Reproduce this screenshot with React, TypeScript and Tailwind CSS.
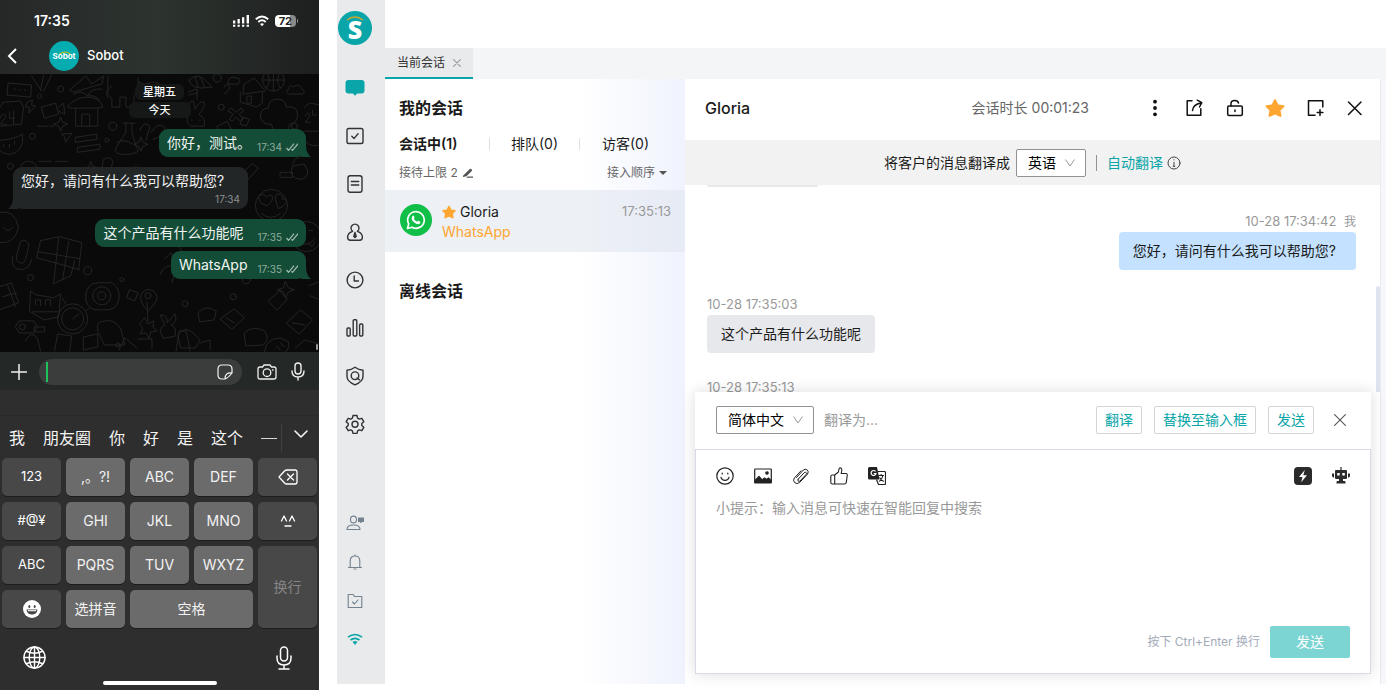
import type { ReactNode } from "react";

type BoxProps = { size?: string; children: ReactNode; stroke?: number; box?: string };

function Icon({ size = "size-5", children, stroke = 1.4, box = "0 0 20 20" }: BoxProps) {
  return (
    <svg
      className={`${size} shrink-0`}
      viewBox={box}
      fill="none"
      stroke="currentColor"
      strokeWidth={stroke}
      strokeLinecap="round"
      strokeLinejoin="round"
      aria-hidden="true"
    >
      {children}
    </svg>
  );
}

const STAR = "M10 1.6c.5 0 .8.3 1 .7l2 4.100 4.800.7c1 .1 1.300 1.100.6 1.800l-3.300 3.200.9 4.700c.1.900-.7 1.500-1.500 1.100L10 15.800l-4.500 2.100c-.8.4-1.600-.2-1.500-1.100l.9-4.700L1.600 8.900c-.7-.7-.4-1.700.6-1.800L7 6.400l2-4.100c.2-.4.5-.7 1-.7z";

/* ---------- phone ---------- */

function Wallpaper() {
  return (
    <svg
      className="absolute inset-0 size-full"
      viewBox="0 0 319 277"
      preserveAspectRatio="xMidYMin slice"
      fill="none"
      stroke="#262827"
      strokeWidth="0.9"
      strokeLinecap="round"
      strokeLinejoin="round"
      aria-hidden="true"
    >
      <path d="M9 9l23 2-1 12-23-2zM15 15h1M20 16h1M25 16h1M32 2l10 15M44 1l-3 15M52 1l-8 16M70 16l16-14 6 8 12-8-2 8-28 8z" />
      <path d="M0 34l4-6 17-1 3 6-2 17-22 2M1 44c0-5 6-5 5-1l-5 7h6M10 38v6h5M14 37v13M28 28l5-2-1 5 4 1-7 7 1-6-4 0z" />
      <path d="M42 33l14-4 3 11-14 4zM59 33l5-4 1 11-6-3M68 32q8-9 20-9 13 1 15 10l-6 1H71zM76 34v18h22V34M82 52V40h8v12M88 22q-6-7-14-2M88 22q2-8 14-7M88 22q6-2 12 4" />
      <path d="M108 2v18l4 5v8h8V23h6v10h8V22l4-6V4M112 12q-8 4-4 12M140 8q4 4 12 0q8 1 12 5l-5 4q-14 4-20-4z" />
      <path d="M189 6q8-8 17 1l6 6-10 1q-11 0-13-8zM195 3l3 10M201 4l3 9M228 8q1-7 8-4 6 0 2 6h-10zM244 10l10-6 11 13-22 3zM240 18v10l16 5 6-4V18M247 22h4v7h-4z" />
      <circle cx="273" cy="6" r="11" /><path d="M262 6h22M273-5v22M266-2q6 8 0 16M280-2q-6 8 0 16M288 15q1-5 5-2 6-5 8 2 5 2 1 5h-14q-4-3 0-5z" />
      <path d="M260 42q0-8 8-8 0-9 9-9 8 0 9 8 11-2 11 8 0 8-8 9 0 8-8 6-8 4-10-6-10 1-11-8zM304 33l5-4 12 2M305 42c0-4 5-4 4 0l-4 6h5M312 36v5h4" />
      <path d="M231 34l5 4 5-4 2 3-4 3 4 5-3 2-4-4-4 4-3-2 4-5-5-3zM189 40q-2-14 4-13 2 4 2 8 5-9 9-7 1 5-5 12 7 5 5 12h-14q-6-6-1-12zM191 46h1M199 46h1M224 13q2-5 6 0-2 4-6 7" />
      <path d="M0 66q12 0 23-6 2 17-12 20-7 0-11-4M4 70v2M10 70v3M15 67v3M61 43l2 5 5 2-5 2-2 5-2-5-5-2 5-2zM62 60l10-1-6 9-1-5zM76 63l21-3v5l-21 3zM78 73l22-3v5l-22 3zM38 52h10M50 52h4M126 48v10l-10 16q-3 7 12 6t8-8l-4-14v-9M123 49h12M117 68q8-4 16 2" />
      <path d="M140 56q4-10 10-4l-4 14M151 58q8-12 14-4-1 8-12 11M141 63l2 5 5 2-5 2-2 5-2-5-5-2 5-2zM217 52l10-5 4 8-9 6zM243 43l6 2-3 7-6-2zM303 57h16M303 60q1 14 16 11M188 18l9-3v10M189 21l8-2" />
      <path d="M20 108V95q3-9 10-8 9 2 8 12v8l-5-2-4 4-5-4zM24 96h1M32 97h1M39 87h13M56 87h12M44 100l2 5 5 2-5 2-2 5-2-5-5-2 5-2zM62 97h10v10H62zM75 97h9v10h-9zM91 87l2 5 4 1-4 2-2 5-2-5-4-1 4-2zM104 85q7-4 9 2l-2 9-9 1z" />
      <path d="M123 105q-7-9 1-12 5 0 6 4 3-6 8-4 6 6-5 15zM180 118q0-15 14-17 14 0 16 14M194 101v18M183 108l24 8M240 101l12-12 6 5-14 15zM238 108l-3 6 6-2M292 90q2-6 8-8M292 92q-5 12 9 13 11-3 3-15z" />
      <circle cx="271" cy="131" r="16" /><path d="M260 128q-4-8 2-8 3 0 4 3 3-4 6-1 1 5-5 9zM275 124q0-6 5-4 3 2 2 5 4-2 4 3-3 5-8 6zM261 139q9 8 19 0" />
      <circle cx="306" cy="162" r="15" /><path d="M299 156h4M308 156h4M297 166q9 8 17-1M308 169q4 6 6-1M280 98h12v5h-12zM0 138q15-4 19 15-4 17-19 15M4 153q5 6 9 0M261 178l8 3-7 8-1-5z" />
      <path d="M41 166l19-4 22 6-3 26M41 166l-4 17 43 12M59 163l-5 46M69 167l-6 38M38 177l42 7M54 209l17-8 4-15" /><path d="M20 170q1-6 6-4 4 2 3 7l-3 12q-2 5-6 3t-3-7zM13 182q-2 13 9 13 8-1 10-10" />
      <path d="M0 212l12-4 7 20-19 7M3 222l14-4M8 210l8 22M30 236l1-20 5 4 18 3 7-4-2 23-14 3zM36 230v-5h5v6M46 230v-5h5v6M33 237h25" />
      <circle cx="73" cy="244" r="15" /><circle cx="73" cy="244" r="11" /><path d="M73 244l6-5M66 229l-3-5M86 236l4-3M86 220q2-12 12-12h14q9 6 7 17-2 11-15 10H95q-10-3-9-15z" /><circle cx="102" cy="221" r="9" /><circle cx="102" cy="221" r="4" />
      <path d="M148 236q-9-9-7-16 4-8 12-4 7 6 2 12zM130 215l8 3-3 8-8-3zM160 200q4-12 16-8l-4 16M165 184l6-6 3 8M178 172l8 8-10 8M147 228l1 18M98 256q-3-10 8-10 8-2 15 8l4 16h-20z" /><circle cx="148" cy="221" r="3" />
      <path d="M145 243l3 6 6-3-1 6 4 4-6 1-2 6-3-5-6 1 3-5-3-5zM163 263q-6-10 2-13l-5-10q8 0 7 8l8-9q3 8-4 11 6 2 4 11zM178 260q6-9 14-3l8 8-5 8h-14zM20 246h14l4 6-4 6H20l-4-6zM35 252h10v5H35zM198 238q8-9 18-2l-2 9-14 2z" />
      <path d="M220 244l14-10 10 9-12 11zM226 243l8 5M244 258q8-8 20-2 6 8-1 14l-17 1zM268 226l11-10 8 8-10 11zM286 248l14-13 12 10-13 14zM292 248l12 2M308 211l11-4M310 221l9 4M285 207l3 6 6 2-6 2-3 6-2-6-6-2 6-2z" />
      <path d="M26 266q6-12 12-2l3 12M55 276l3-17 14 2-2 15M84 262l14-3v13l-14 3zM119 275l6-12 12 10M138 264h14v10M176 276l3-20h7l4 20M200 268l10-3v10M264 277q2-14 16-14l8 4q2 8-6 12M280 268l4 4M276 271l4 4M295 273l9-8 15 4" />
      <circle cx="40" cy="22" r="2" /><circle cx="61" cy="15" r="3" /><circle cx="113" cy="52" r="4" /><circle cx="221" cy="33" r="3" /><circle cx="217" cy="4" r="4" /><circle cx="33" cy="62" r="3" /><circle cx="107" cy="66" r="2" /><circle cx="11" cy="92" r="3" /><circle cx="89" cy="119" r="3" /><circle cx="31" cy="203" r="3" /><circle cx="88" cy="196" r="4" /><circle cx="273" cy="164" r="3" /><circle cx="122" cy="205" r="2" /><circle cx="246" cy="205" r="4" /><circle cx="185" cy="229" r="3" /><circle cx="23" cy="252" r="3" /><circle cx="233" cy="222" r="3" /><circle cx="118" cy="270" r="2" /><circle cx="294" cy="52" r="3" />
    </svg>
  );
}

function Ticks() {
  return (
    <svg className="h-2 w-3 shrink-0" viewBox="0 0 12 8" fill="none" stroke="#9bb8aa" strokeWidth="1.3" aria-hidden="true">
      <path d="M.5 5l2 2.300L8 .7M5.500 6.300l1 1L12 .7" />
    </svg>
  );
}

function Outgoing({ text, time, gap = "gap-3", tail = false, space }: { text: string; time: string; gap?: string; tail?: boolean; space: string }) {
  return (
    <div className={`relative flex h-7 items-end self-end rounded-[9px] bg-[#144d37] px-2 pb-1 ${space} ${gap}`}>
      <span className="text-sm leading-5 text-[#f1f4f2]">{text}</span>
      <span className="flex items-center gap-1 text-[10px] leading-3 text-[#8fab9e]">
        {time}
        <Ticks />
      </span>
      {tail && (
        <svg className="absolute -right-[5px] bottom-0 h-3 w-3" viewBox="0 0 12 12" fill="#144d37" aria-hidden="true">
          <path d="M0 0h7q0 8 5 12H2z" />
        </svg>
      )}
    </div>
  );
}

function Key({ children, dark = false, className = "", label }: { children: ReactNode; dark?: boolean; className?: string; label?: string }) {
  return (
    <button
      type="button"
      aria-label={label}
      className={`flex items-center justify-center rounded-[5px] shadow-[0_1px_0_#1c1c1c] ${
        dark ? "bg-[#484848] text-[13px] text-white" : "bg-[#6b6b6b] text-sm text-[#f2f2f2]"
      } ${className}`}
    >
      {children}
    </button>
  );
}

function Phone() {
  return (
    <section aria-label="WhatsApp" className="flex w-[319px] shrink-0 flex-col bg-[#2e2e2e] text-white">
      <header className="flex h-[74px] flex-col bg-linear-to-r from-[#262828] via-[#2c342f] to-[#1e1f1f]">
        <div className="flex h-[42px] items-center justify-between pr-[21px] pl-[34px]">
          <span className="text-sm font-semibold">17:35</span>
          <div className="flex items-center gap-1.5">
            <svg className="h-3 w-4" viewBox="0 0 16 12" fill="#fff" aria-hidden="true">
              <path d="M0 5.500h2.300v3H0zM4.500 4h2.300v4.500H4.500zM9 2.300h2.300v6.200H9zM13.600 0H16v8.500h-2.400zM0 9.700h2.300v2H0zM4.500 9.700h2.300v2H4.500zM9 9.700h2.300v2H9zM13.600 9.700H16v2h-2.400z" />
            </svg>
            <svg className="h-3 w-3.5" viewBox="0 0 14 12" fill="none" stroke="#fff" strokeWidth="1.900" aria-hidden="true">
              <path d="M.8 4.300q6.200-5.800 12.400 0M3.300 7q3.700-3.300 7.400 0" />
              <path d="M5 9.100q2-1.600 4 0l-2 2.200z" fill="#fff" stroke="none" />
            </svg>
            <span className="flex items-center gap-px">
              <span className="rounded-[4px] bg-linear-to-r from-white from-72% to-[#8a8a8a] to-72% px-1 text-[11px] leading-3 font-bold text-[#222]">72</span>
              <span className="h-1 w-px rounded-r bg-[#8a8a8a]" />
            </span>
          </div>
        </div>
        <div className="flex h-7 items-center pl-1.5">
          <button type="button" aria-label="返回" className="flex size-4 items-center">
            <svg className="h-4 w-3" viewBox="0 0 12 16" fill="none" stroke="#fff" strokeWidth="2" aria-hidden="true">
              <path d="M10 1L3 8l7 7" />
            </svg>
          </button>
          <span className="relative ml-[27px] flex size-[30px] items-center justify-center rounded-full bg-[#06adb0]">
            <span className="text-[8px] leading-none font-bold">Sobot</span>
            <svg className="absolute top-2.5 left-2.5 h-1 w-3" viewBox="0 0 12 4" fill="none" stroke="#c9c32a" strokeWidth="1.200" aria-hidden="true">
              <path d="M.5 3Q6-1 11.500 3" />
            </svg>
          </span>
          <span className="ml-2 text-[13px] font-medium">Sobot</span>
        </div>
      </header>

      <div className="relative flex min-h-0 flex-1 flex-col overflow-hidden bg-[#0a0a0a]">
        <Wallpaper />
        <div className="relative flex flex-col px-[13px] pt-2.5">
          <span className="self-center rounded-md bg-[#151817] px-2 text-[11px] leading-4 font-medium">星期五</span>
          <span className="mt-0.5 self-center rounded-md bg-[#151817] px-5 text-[11px] leading-4 font-medium">今天</span>
          <Outgoing text="你好，测试。" time="17:34" gap="gap-1.5" tail space="mt-[11px]" />
          <div className="relative mt-2.5 flex h-[42px] w-[235px] flex-col rounded-[9px] bg-[#222627] px-2 pt-1">
            <span className="text-sm leading-5 whitespace-nowrap text-[#f1f1f1]">您好，请问有什么我可以帮助您?</span>
            <span className="self-end text-[10px] leading-4 text-[#8d9091]">17:34</span>
            <svg className="absolute bottom-0 -left-[5px] h-3 w-3" viewBox="0 0 12 12" fill="#222627" aria-hidden="true">
              <path d="M12 0H5q0 8-5 12h10z" />
            </svg>
          </div>
          <Outgoing text="这个产品有什么功能呢" time="17:35" space="mt-2.5" gap="gap-3.5" />
          <Outgoing text="WhatsApp" time="17:35" tail space="mt-1" gap="gap-2.5" />
        </div>
        <span className="absolute right-px bottom-0.5 h-1.5 w-0.5 rounded bg-[#9a9a9a]" />
      </div>

      <div className="flex h-[38px] items-center bg-[#242827] pt-px pl-[11px] text-[#f0f0f0]">
        <button type="button" aria-label="添加">
          <Icon size="size-4" box="0 0 16 16" stroke={1.5}><path d="M8 .5v15M.5 8h15" /></Icon>
        </button>
        <div className="relative ml-3 w-[203px]">
          <input aria-label="消息" className="block h-[26px] w-full rounded-full bg-[#3a3d3c] pr-8 pl-3 text-sm outline-none" />
          <span className="absolute top-[3px] left-[7px] h-5 w-0.5 bg-[#1fc15d]" />
          <span className="absolute top-[5px] right-[9px]">
            <Icon size="size-4" box="0 0 16 16" stroke={1.2}>
              <path d="M15 9V5q0-4-4-4H5Q1 1 1 5v6q0 4 4 4h3q3-1 7-6zM8 15q0-7 7-6" />
            </Icon>
          </span>
        </div>
        <button type="button" aria-label="拍照" className="ml-[15px]">
          <Icon size="h-4 w-5" box="0 0 20 16" stroke={1.3}>
            <path d="M1 5q0-2 2-2h2.500L7 1h6l1.500 2H17q2 0 2 2v8q0 2-2 2H3q-2 0-2-2z" />
            <circle cx="10" cy="8.700" r="3.800" /><path d="M15.500 6h.5" />
          </Icon>
        </button>
        <button type="button" aria-label="录音" className="ml-3.5">
          <Icon size="h-[19px] w-3.5" box="0 0 14 19" stroke={1.4}>
            <rect x="4" y="1" width="6" height="11" rx="3" /><path d="M1 9q0 6 6 6t6-6M7 15v3" />
          </Icon>
        </button>
      </div>

      <div className="h-[26px] border-b border-[#292929]" />
      <div className="flex h-[42px] items-center gap-[18px] pt-0.5 pl-[9px] text-base text-[#f4f4f4]">
        {["我", "朋友圈", "你", "好", "是", "这个"].map((word) => (
          <button key={word} type="button" className="leading-6 whitespace-nowrap">{word}</button>
        ))}
        <button type="button" aria-label="一" className="h-6 w-4 shrink-0"><span className="block h-px w-full bg-[#d8d8d8]" /></button>
        <span className="-ml-3.5 h-7 w-px bg-[#414141]" />
        <button type="button" aria-label="展开" className="-mt-2 -ml-1.5">
          <Icon size="h-2 w-3.5" box="0 0 14 8" stroke={1.6}><path d="M1 1l6 6 6-6" /></Icon>
        </button>
      </div>

      <div className="grid auto-rows-[38px] grid-cols-5 gap-x-[5px] gap-y-1.5 px-0.5">
        <Key dark>123</Key>
        <Key>,。?!</Key>
        <Key>ABC</Key>
        <Key>DEF</Key>
        <Key dark label="删除">
          <Icon size="h-4 w-5" box="0 0 20 16" stroke={1.3}>
            <path d="M1 8l5.500-6Q7.500 1 9 1h8q2 0 2 2v10q0 2-2 2H9q-1.500 0-2.500-1zM9.500 5l6 6M15.500 5l-6 6" />
          </Icon>
        </Key>
        <Key dark>#@¥</Key>
        <Key>GHI</Key>
        <Key>JKL</Key>
        <Key>MNO</Key>
        <Key dark label="表情符号">
          <Icon size="h-3 w-4" box="0 0 16 12" stroke={1.3}><path d="M1.500 6l2.500-5 2.500 5M9.500 6L12 1l2.500 5M5 11h6" /></Icon>
        </Key>
        <Key dark>ABC</Key>
        <Key>PQRS</Key>
        <Key>TUV</Key>
        <Key>WXYZ</Key>
        <Key dark className="row-span-2"><span className="text-sm text-[#858585]">换行</span></Key>
        <Key dark label="表情">
          <svg className="size-[18px]" viewBox="0 0 18 18" aria-hidden="true">
            <circle cx="9" cy="9" r="9" fill="#fff" />
            <ellipse cx="6.300" cy="6.400" rx="1" ry="1.500" fill="#444" /><ellipse cx="11.700" cy="6.400" rx="1" ry="1.500" fill="#444" />
            <path d="M3.500 9.500h11q-.5 5-5.500 5t-5.500-5z" fill="#444" /><path d="M4.800 10.700h8.400" stroke="#fff" strokeWidth="1.100" />
          </svg>
        </Key>
        <Key>选拼音</Key>
        <Key className="col-span-2">空格</Key>
      </div>

      <div className="flex h-[53px] items-center justify-between pt-1.5 pr-[27px] pl-[23px]">
        <button type="button" aria-label="切换键盘">
          <Icon size="size-[23px]" box="0 0 24 24" stroke={1.5}>
            <circle cx="12" cy="12" r="11" /><ellipse cx="12" cy="12" rx="5.500" ry="11" />
            <path d="M12 1v22M1 12h22M3.500 5.500q8.500 4 17 0M3.500 18.500q8.500-4 17 0" />
          </Icon>
        </button>
        <button type="button" aria-label="听写">
          <Icon size="h-6 w-4" box="0 0 16 24" stroke={1.5}>
            <rect x="4.500" y="1" width="7" height="14" rx="3.500" /><path d="M1 10v2q0 7 7 7t7-7v-2M8 19v4M3 23h10" />
          </Icon>
        </button>
      </div>
      <div className="flex h-[9px] items-start justify-center"><span className="h-1 w-[114px] rounded-full bg-white" /></div>
    </section>
  );
}

/* ---------- desk ---------- */

const railTop: { label: string; icon: ReactNode }[] = [
  {
    label: "会话",
    icon: (
      <svg className="size-5" viewBox="0 0 20 20" fill="#09a5a8" aria-hidden="true">
        <path d="M3.500 2h13q3 0 3 3v7.500q0 3-3 3h-4.300L10 17.700l-2.200-2.200H3.500q-3 0-3-3V5q0-3 3-3z" />
      </svg>
    ),
  },
  { label: "工单", icon: <Icon><rect x="2" y="2.500" width="16" height="15" rx="1.800" /><path d="M6.800 10.200l2.300 2.200 4-4.600" /></Icon> },
  { label: "记录", icon: <Icon><rect x="3" y="1.700" width="14" height="16.600" rx="2.200" /><path d="M6.300 7.500h7.400M6.300 11h7.400" /></Icon> },
  {
    label: "客户",
    icon: (
      <Icon>
        <path d="M7.600 9.300a4 4 0 1 1 4.800 0q5 1.700 5 6 0 3-2.800 3H5.400q-2.800 0-2.800-3 0-4.300 5-6z" />
        <path d="M10 10.500l-1.200 4 1.200 1 1.200-1z" fill="currentColor" />
      </Icon>
    ),
  },
  { label: "历史", icon: <Icon><circle cx="10" cy="10" r="7.900" /><path d="M9.200 6v5h4.300" /></Icon> },
  { label: "统计", icon: <Icon><rect x="2" y="10" width="3.200" height="8" rx="1" /><rect x="8.200" y="1.700" width="3.600" height="16.300" rx="1" /><rect x="14.600" y="6" width="3.200" height="12" rx="1" /></Icon> },
  { label: "质检", icon: <Icon><path d="M10 1.300q3.500 2.600 8 2.900v6.300q0 5-8 8.300-8-3.300-8-8.300V4.200q4.500-.3 8-2.900z" /><circle cx="10" cy="9.700" r="3.800" /><path d="M12 12l2.600 1.800" /></Icon> },
  {
    label: "设置",
    icon: (
      <Icon>
        <path d="M8 1.500h4l.6 2.600 1.700 1 2.500-.8 2 3.400-2 1.900v1.800l2 1.900-2 3.400-2.500-.8-1.700 1-.6 2.500H8l-.6-2.500-1.700-1-2.500.8-2-3.400 2-1.900V9.600l-2-1.900 2-3.400 2.500.8 1.700-1z" />
        <circle cx="10" cy="10.300" r="3" />
      </Icon>
    ),
  },
];

const railBottom: { label: string; icon: ReactNode }[] = [
  {
    label: "在线客服",
    icon: (
      <Icon size="h-4 w-[18px]" box="0 0 18 16" stroke={1.1}>
        <ellipse cx="7.500" cy="4.500" rx="3" ry="3.400" /><path d="M1 14.500q0-4.500 6.500-4.500t6.500 4.500z" />
        <path d="M12.500 3h5v3.500h-2l-.8.8-.7-.8h-1.500z" fill="currentColor" />
      </Icon>
    ),
  },
  { label: "通知", icon: <Icon size="size-4" box="0 0 16 16" stroke={1.1}><path d="M1.500 13.500h13M3.200 13.500V7q0-5 4.800-5t4.800 5v6.500M8 .7V2M7 15h2" /></Icon> },
  { label: "任务", icon: <Icon size="size-4" box="0 0 16 16" stroke={1.1}><path d="M1.200 1.500h5l1.300 2h7.300v11H1.200zM5.500 9l2 2 3.500-4" /></Icon> },
  {
    label: "网络",
    icon: (
      <svg className="h-4 w-4" viewBox="0 0 16 16" fill="none" stroke="#09a5a8" strokeWidth="1.700" aria-hidden="true">
        <path d="M1 5.200q7-5.400 14 0M3.500 8q4.500-3.400 9 0" />
        <path d="M5.500 9.800q2.500-1.500 5 0L8 13z" fill="#09a5a8" stroke="none" />
      </svg>
    ),
  },
];

function Rail() {
  return (
    <nav aria-label="主导航" className="flex w-12 shrink-0 flex-col items-start bg-[#e8eaec] pt-[11px] pb-[25px] text-[#333]">
      <span className="relative ml-px flex size-[34px] items-center justify-center rounded-full bg-[#09a5a8] pt-0.5 font-['Open_Sans','Inter',sans-serif] text-[25px] leading-none font-extrabold text-white">
        S
        <svg className="absolute top-[5px] left-2 h-1.5 w-[18px]" viewBox="0 0 18 6" fill="none" stroke="#d0a52c" strokeWidth="1.300" aria-hidden="true">
          <path d="M1 4Q9-2 17 4" />
        </svg>
      </span>
      <div className="mt-[19px] flex flex-col">
        {railTop.map((item) => (
          <button key={item.label} type="button" aria-label={item.label} className="flex h-12 w-9 items-center justify-center">{item.icon}</button>
        ))}
      </div>
      <div className="mt-auto flex flex-col text-[#74818f]">
        {railBottom.map((item) => (
          <button key={item.label} type="button" aria-label={item.label} className="flex h-[39px] w-9 items-center justify-center">{item.icon}</button>
        ))}
      </div>
    </nav>
  );
}

function Sessions() {
  return (
    <aside className="w-[300px] shrink-0 bg-linear-to-r from-white from-65% to-[#f0f3fd] pt-[17px]">
      <h2 className="px-3.5 text-base leading-6 font-semibold">我的会话</h2>
      <div className="mt-3 grid h-6 grid-cols-[90px_90px_1fr] items-center pr-3.5 pl-3.5 text-sm">
        <button type="button" className="text-left font-semibold">会话中(1)</button>
        <button type="button" className="h-3 border-l border-[#dcdfe4] leading-3">排队(0)</button>
        <button type="button" className="h-3 border-l border-[#dcdfe4] leading-3">访客(0)</button>
      </div>
      <div className="mt-[7px] flex h-5 items-center justify-between px-3.5 text-xs text-[#666]">
        <span className="flex items-center gap-1">
          接待上限 2
          <svg className="size-3" viewBox="0 0 12 12" fill="#555" aria-hidden="true">
            <path d="M1 8.800L7.800 2q.7-.6 1.400 0l.6.600q.6.700 0 1.400L4.500 9.300 1 10zM5.500 9.500H11v1.200H4.300z" />
          </svg>
        </span>
        <button type="button" className="flex items-center gap-1 pr-1">
          接入顺序
          <svg className="h-1 w-2" viewBox="0 0 8 4" fill="#555" aria-hidden="true"><path d="M0 0h8L4 4z" /></svg>
        </button>
      </div>
      <div className="mt-[7px] flex h-[62px] items-start bg-[#dfe4ec]/55 pr-3.5 pl-[15px]">
        <span className="mt-3.5 flex size-8 items-center justify-center rounded-full bg-[#0fbf47]">
          <svg className="size-5" viewBox="0 0 20 20" fill="none" aria-hidden="true">
            <path d="M1.500 18.500l1.200-4.600a8.300 8.300 0 1 1 3.300 3.300z" stroke="#fff" strokeWidth="1.700" strokeLinejoin="round" />
            <path d="M7 5.500q.6-.2.900.4l.7 1.600q.1.400-.7 1.300 1 2 3.200 3 .9-1.200 1.300-1l1.800.9q.4.200.2.900-.5 1.700-2.300 1.700-1.800-.1-3.900-1.700-2.300-2-2.600-3.900 0-2.300 1.400-3.200z" fill="#fff" />
          </svg>
        </span>
        <div className="ml-2.5 flex flex-1 flex-col pt-3 text-sm leading-5">
          <span className="flex items-center gap-1">
            <svg className="size-3.5" viewBox="1 1 18 17.500" fill="#ffa531" aria-hidden="true"><path d={STAR} /></svg>
            Gloria
          </span>
          <span className="text-[#ffa531]">WhatsApp</span>
        </div>
        <time className="pt-3 text-[13px] leading-[18px] text-[#999]">17:35:13</time>
      </div>
      <h2 className="mt-[27px] px-3.5 text-base leading-6 font-semibold">离线会话</h2>
    </aside>
  );
}

function Picker({ label, value, options, width }: { label: string; value: string; options: string[]; width: string }) {
  return (
    <span className={`relative shrink-0 ${width}`}>
      <select
        aria-label={label}
        defaultValue={value}
        className="block h-7 w-full appearance-none rounded-[2px] border border-[#8f9296] bg-white pl-[11px] text-sm text-black outline-none"
      >
        {options.map((o) => (<option key={o}>{o}</option>))}
      </select>
      <svg className="pointer-events-none absolute top-2.5 right-[11px] h-2 w-2.5" viewBox="0 0 10 8" fill="none" stroke="#999" aria-hidden="true">
        <path d="M.5.5L5 7 9.500.5" />
      </svg>
    </span>
  );
}

const actionClass = "h-7 shrink-0 rounded-[2px] border border-[#d3d5d8] bg-white px-2 text-sm leading-none whitespace-nowrap text-[#09a5a8]";

function Conversation() {
  return (
    <main className="flex min-w-0 flex-1 flex-col bg-white">
      <header className="flex h-[61px] shrink-0 items-center pr-[15px] pb-[3px] pl-5">
        <h1 className="flex-1 text-base font-medium">Gloria</h1>
        <span className="mr-14 text-sm text-[#666]">会话时长 00:01:23</span>
        <div className="flex items-center gap-5 text-[#111]">
          <button type="button" aria-label="更多">
            <svg className="size-5" viewBox="0 0 20 20" fill="currentColor" aria-hidden="true"><circle cx="10" cy="3.700" r="1.900" /><circle cx="10" cy="10" r="1.900" /><circle cx="10" cy="16.300" r="1.900" /></svg>
          </button>
          <button type="button" aria-label="转接">
            <Icon stroke={1.5}><path d="M7 2.700H2.200v14.600h13.600v-6.500M7.500 12.500q.5-6 8.500-7.500M12.300 2.200l4.500 2.500-2.300 4.300" /></Icon>
          </button>
          <button type="button" aria-label="锁定">
            <Icon stroke={1.5}><rect x="2.700" y="8" width="14.600" height="9.500" rx="1.200" /><path d="M6 8V5.500Q6 2.500 9.800 2.500q3.200 0 3.700 2.500M10 12v1.500" /></Icon>
          </button>
          <button type="button" aria-label="星标">
            <svg className="size-5" viewBox="1 .5 18 18.500" fill="#ffa531" aria-hidden="true"><path d={STAR} /></svg>
          </button>
          <button type="button" aria-label="新建工单">
            <Icon stroke={1.5}><path d="M17.800 9V2.700H3.500v14.600H10M15 11.800v5.700M12.200 14.600h5.700" /></Icon>
          </button>
          <button type="button" aria-label="关闭会话">
            <Icon stroke={1.5}><path d="M3.500 4L16 16.500M16 4L3.500 16.500" /></Icon>
          </button>
        </div>
      </header>

      <div className="flex h-[45px] shrink-0 items-center justify-center bg-[#f2f2f2] text-sm">
        <span>将客户的消息翻译成</span>
        <span className="ml-1.5 flex"><Picker label="翻译语言" value="英语" options={["英语", "简体中文"]} width="w-[70px]" /></span>
        <span className="ml-2.5 h-4 w-px bg-[#8f9296]" />
        <button type="button" className="ml-2.5 text-[#09a5a8]">自动翻译</button>
        <button type="button" aria-label="说明" className="ml-1 text-[#444]">
          <Icon size="size-3.5" box="0 0 14 14" stroke={1}><circle cx="7" cy="7" r="6" /><path d="M7 6.300v4M7 3.700v.3M6.200 10.300h1.600" /></Icon>
        </button>
      </div>

      <div className="relative flex min-h-0 flex-1 flex-col overflow-hidden pr-6 pl-[22px] text-[#999]">
        <div className="h-0.5 w-[111px] shrink-0 rounded-b bg-[#e7e8ec]" />
        <div className="mt-[25px] flex shrink-0 flex-col items-end">
          <span className="text-[13px] leading-[18px]">10-28 17:34:42 <span className="ml-1 text-xs">我</span></span>
          <p className="mt-0.5 rounded-[4px] bg-[#c4e2ff] py-2 pr-5 pl-3.5 text-sm leading-[22px] text-[#1a1a1a]">您好，请问有什么我可以帮助您?</p>
        </div>
        <div className="mt-[25px] flex shrink-0 flex-col items-start">
          <span className="text-[13px] leading-[18px]">10-28 17:35:03</span>
          <p className="mt-0.5 rounded-[4px] bg-[#e7e8ec] px-3.5 py-2 text-sm leading-[22px] text-[#1a1a1a]">这个产品有什么功能呢</p>
        </div>
        <span className="mt-[25px] shrink-0 text-[13px] leading-[18px]">10-28 17:35:13</span>
        <span className="absolute top-[101px] right-0 bottom-0 w-1 rounded-t bg-[#dfe5f0]" />
      </div>

      <div className="relative mr-[9px] mb-2.5 ml-2.5 shrink-0 bg-white shadow-[0_0_14px_rgba(0,0,0,0.14)]">
        <div className="flex h-[57px] items-center gap-3 pr-[25px] pb-px pl-[21px]">
          <Picker label="源语言" value="简体中文" options={["简体中文", "英语"]} width="w-[98px]" />
          <input aria-label="翻译为" placeholder="翻译为..." className="-ml-0.5 min-w-0 flex-1 text-sm outline-none placeholder:text-[#999]" />
          <button type="button" className={actionClass}>翻译</button>
          <button type="button" className={actionClass}>替换至输入框</button>
          <button type="button" className={actionClass}>发送</button>
          <button type="button" aria-label="关闭翻译" className="ml-2 text-[#555]">
            <Icon size="size-3" box="0 0 12 12" stroke={1.1}><path d="M.6.6l10.800 10.800M11.400.6L.6 11.400" /></Icon>
          </button>
        </div>
        <div className="flex h-[225px] flex-col border border-[#d6dbe7] px-5 pt-[17px] pb-[15px]">
          <div className="flex items-center gap-5 text-[#222]">
            <button type="button" aria-label="表情">
              <Icon size="size-[18px]" box="0 0 18 18" stroke={1.2}><circle cx="9" cy="9" r="8.200" /><path d="M5 10.300q.8 3 4 3t4-3M6.200 6v1M11.800 6v1" /></Icon>
            </button>
            <button type="button" aria-label="图片">
              <Icon size="size-[18px]" box="0 0 18 18" stroke={1.2}>
                <rect x=".7" y="2" width="16.600" height="14" rx=".5" /><path d="M1 15.500v-2l4-4 3 3.500 2.500-2 2 1.500 2-1.500 2.500 2.500v2z" fill="currentColor" /><circle cx="13" cy="6" r="1.200" fill="currentColor" />
              </Icon>
            </button>
            <button type="button" aria-label="附件">
              <Icon size="size-[18px]" box="0 0 18 18" stroke={1}>
                <path d="M4.500 10.500l6.700-7.300q2-2 4-.3t.3 4.200l-7.800 8.300q-2.600 2.300-5 .2-2.300-2.300-.2-4.800l6.500-7M6.300 12l5.900-6.300q1.200-1 2 0 .7 1-.2 1.900l-6 6.400q-1 .9-1.800.1-.8-.9.1-2.100z" />
              </Icon>
            </button>
            <button type="button" aria-label="点赞">
              <Icon size="size-[18px]" box="0 0 18 18" stroke={1.1}>
                <path d="M4.700 8L8.400 5l.7-3.300q.4-1.200 1.700-.7 1.300.7 1 2.500l-.6 3h5q1.200.2 1.100 1.500l-1 7.300q-.3 1.700-1.900 1.700H2.300Q.8 17 .8 15.500V9.500Q.8 8 2.300 8zM4.700 8v9" />
              </Icon>
            </button>
            <button type="button" aria-label="翻译工具">
              <svg className="size-[18px]" viewBox="0 0 18 18" fill="none" aria-hidden="true">
                <path d="M1.500 0H9l2.500 12.500h-10Q0 12.500 0 11V1.500Q0 0 1.500 0z" fill="#222" />
                <path d="M7.600 4.500A2.500 2.500 0 1 0 8 6.700H5.700" stroke="#fff" strokeWidth="1.200" />
                <path d="M10 4.500h6.500q1 0 1 1v11q0 1-1 1h-6l-2-5" stroke="#222" strokeWidth="1.200" />
                <path d="M10.500 8.500h5.500M13.200 7v1.500M11.300 14.500q3-2.500 3.600-6M11.600 10.500q1 2.500 4.200 4" stroke="#222" strokeWidth="1.100" />
              </svg>
            </button>
            <span className="flex-1" />
            <button type="button" aria-label="快捷回复">
              <svg className="size-[18px]" viewBox="0 0 18 18" aria-hidden="true"><rect width="18" height="18" rx="4" fill="#2b2b2b" /><path d="M10.800 3L5 10h3.500l-1.300 5.300L13 8.200H9.300z" fill="#fff" /></svg>
            </button>
            <button type="button" aria-label="机器人">
              <svg className="size-[18px]" viewBox="0 0 18 18" fill="#2b2b2b" aria-hidden="true">
                <path d="M8.400 0h1.200v3H14q1 0 1 1v7q0 1-1 1h-3v2h1.500q1 0 1 1v1.500h-9V15q0-1 1-1H7v-2H4q-1 0-1-1V4q0-1 1-1h4.400zM0 6.500h2v4H1.200Q0 10 0 8.500zM16 6.500h2v2q0 1.500-1.200 2H16z" />
                <path d="M5.200 6h2.500v2.500H5.200zM10.300 6h2.500v2.500h-2.500z" fill="#fff" />
              </svg>
            </button>
          </div>
          <textarea
            aria-label="回复内容"
            placeholder="小提示：输入消息可快速在智能回复中搜索"
            className="mt-[13px] block min-h-0 w-full flex-1 resize-none text-sm leading-5 outline-none placeholder:text-[#999]"
          />
          <div className="flex items-center justify-end gap-2.5">
            <span className="text-xs text-[#a3abb8]">按下 Ctrl+Enter 换行</span>
            <button type="button" className="h-8 w-20 rounded-[2px] bg-[#7dd5d3] text-sm text-white">发送</button>
          </div>
        </div>
      </div>
    </main>
  );
}

export default function App() {
  return (
    <div className="flex h-screen min-h-[690px] bg-white font-['Inter','Noto_Sans_CJK_SC',sans-serif] text-[#1a1a1a]">
      <Phone />
      <div className="mb-1.5 ml-[18px] flex min-w-0 flex-1">
        <Rail />
        <div className="flex min-w-0 flex-1 flex-col pt-12">
          <div className="flex h-[31px] shrink-0 bg-[#f4f5f7]">
            <div className="flex w-[88px] items-center gap-2 border-b-2 border-[#09a5a8] bg-[#e8eaec] pl-3 text-xs text-[#333]">
              <span>当前会话</span>
              <button type="button" aria-label="关闭标签" className="text-[#999]">
                <Icon size="size-2" box="0 0 8 8" stroke={1.1}><path d="M.6.6l6.800 6.800M7.400.6L.6 7.400" /></Icon>
              </button>
            </div>
          </div>
          <div className="flex min-h-0 flex-1">
            <Sessions />
            <Conversation />
            <div className="w-1.5 shrink-0 border-l border-[#e8eaf0] bg-[#f6f7fb]" />
          </div>
        </div>
      </div>
    </div>
  );
}
